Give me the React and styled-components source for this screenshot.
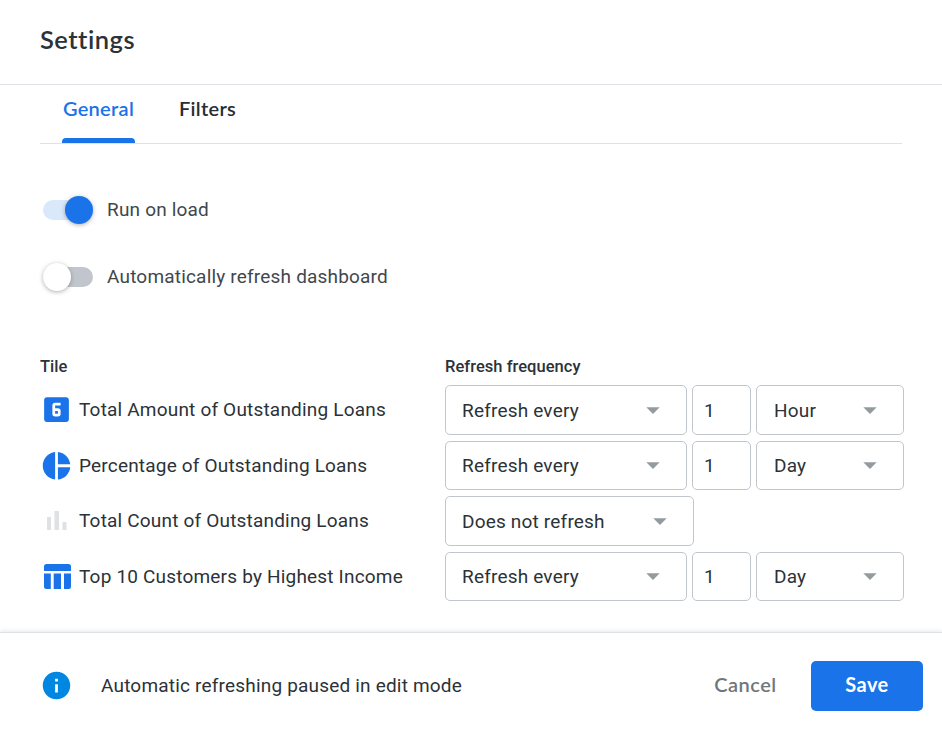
import React, { useState } from "react";
import styled, { createGlobalStyle } from "styled-components";
import { MdLooks6, MdPieChart, MdInfo, MdArrowDropDown } from "react-icons/md";

const GlobalStyle = createGlobalStyle`
  * { box-sizing: border-box; }
  body { margin: 0; background: #fff; }
  button, input { font: inherit; letter-spacing: inherit; color: inherit; }
`;

const Dialog = styled.div`
  display: flex;
  flex-direction: column;
  width: 942px;
  height: 732px;
  overflow: hidden;
  background: #fff;
  color: #2b3238;
  font-family: Roboto, sans-serif;
  font-size: 19px;
  line-height: 24px;
  letter-spacing: 0.19px;
`;

const Header = styled.header`
  height: 85px;
  padding: 23px 40px 0;
  border-bottom: 1px solid #dee1e5;
`;

const Title = styled.h1`
  margin: 0;
  font-family: Lato, sans-serif;
  font-size: 25.5px;
  line-height: 32px;
  font-weight: 600;
  letter-spacing: 0.5px;
`;

const Body = styled.main`
  flex: 1;
  padding: 0 38px 0 40px;
`;

const TabBar = styled.nav`
  display: flex;
  gap: 44px;
  height: 59px;
  margin-right: 2px;
  padding-left: 22px;
  border-bottom: 1px solid #dee1e5;
`;

const Tab = styled.button`
  display: flex;
  flex-direction: column;
  align-items: center;
  justify-content: space-between;
  width: ${(p) => p.$width}px;
  padding: 11px 0 0;
  border: 0;
  background: none;
  font-family: Lato, sans-serif;
  font-size: 20px;
  font-weight: 600;
  letter-spacing: 0.3px;
  white-space: nowrap;
  color: ${(p) => (p.$active ? "#1a73e8" : "#262d33")};
  &::after {
    content: "";
    width: 100%;
    height: 5px;
    border-radius: 4px 4px 0 0;
    background: ${(p) => (p.$active ? "#1a73e8" : "transparent")};
  }
`;

const Toggles = styled.div`
  display: flex;
  flex-direction: column;
  gap: 39px;
  padding: 52px 0 0 3px;
`;

const ToggleRow = styled.label`
  display: flex;
  align-items: center;
  gap: 14px;
  height: 28px;
  color: #3f474d;
`;

const Track = styled.button`
  display: flex;
  align-items: center;
  justify-content: ${(p) => (p.$on ? "flex-end" : "flex-start")};
  width: 50px;
  height: 20px;
  padding: 0;
  border: 0;
  border-radius: 10px;
  background: ${(p) => (p.$on ? "#d9e8fb" : "#c1c6cc")};
`;

const Knob = styled.span`
  flex: none;
  width: 28px;
  height: 28px;
  border-radius: 50%;
  background: ${(p) => (p.$on ? "#1a73e8" : "#fff")};
  box-shadow: 0 1px 4px rgba(60, 64, 67, 0.42);
`;

const Tiles = styled.div`
  display: grid;
  grid-template-columns: 405px 1fr;
  grid-template-rows: 19px 50px 49px 50px 49px;
  row-gap: 6px;
  padding-top: 69px;
  align-items: center;
`;

const Heading = styled.div`
  align-self: start;
  font-size: 16.5px;
  line-height: 14px;
  font-weight: 500;
  letter-spacing: 0.04px;
`;

const TileName = styled.div`
  display: flex;
  align-items: center;
  gap: 6px;
  white-space: nowrap;
`;

const TileIcon = styled.span`
  display: flex;
  width: 33px;
  height: 33px;
  margin-bottom: ${(p) => (p.$raised ? 2 : 0)}px;
  color: #1a73e8;
`;

const Controls = styled.div`
  display: flex;
  gap: 5px;
  height: 100%;
`;

const Select = styled.button`
  display: flex;
  align-items: center;
  justify-content: space-between;
  width: ${(p) => p.$width}px;
  padding: ${(p) => (p.$tall ? 1 : 0)}px 17.5px 0 ${(p) => p.$inset || 16}px;
  border: 1px solid #c1c6cc;
  border-radius: 5px;
  background: #fff;
  svg {
    margin-bottom: 1px;
    color: #939b9f;
  }
`;

const Amount = styled.input`
  width: 59px;
  padding: ${(p) => (p.$tall ? 1 : 0)}px 11px 0;
  border: 1px solid #c1c6cc;
  border-radius: 5px;
  background: #fff;
`;

const Footer = styled.footer`
  display: flex;
  align-items: center;
  height: 100px;
  padding: 6px 19px 0 40px;
  border-top: 1px solid #dee1e5;
  box-shadow: 0 -1px 4px rgba(60, 64, 67, 0.12);
`;

const Notice = styled.div`
  display: flex;
  flex: 1;
  align-items: center;
  gap: 28px;
  svg { color: #0087e1; }
`;

const ActionButton = styled.button`
  height: 50px;
  width: ${(p) => (p.$primary ? 112 : 131)}px;
  padding: 0 0 3px;
  border: 0;
  border-radius: 5px;
  background: ${(p) => (p.$primary ? "#1a73e8" : "transparent")};
  color: ${(p) => (p.$primary ? "#fff" : "#70777b")};
  font-family: Lato, sans-serif;
  font-size: 20px;
  font-weight: ${(p) => (p.$primary ? 700 : 600)};
  letter-spacing: ${(p) => (p.$primary ? 0.4 : 0.5)}px;
`;

const BarsIcon = () => (
  <svg width="33" height="33" viewBox="0 0 33 33" fill="#dee1e5">
    <path d="M7 13h4v13H7zM14.5 7H19v19h-4.5zM22.5 18h4v8h-4z" />
  </svg>
);

const TableIcon = () => (
  <svg width="33" height="33" viewBox="0 0 33 33" fill="currentColor">
    <path d="M6.5 4h22A2.5 2.5 0 0 1 31 6.500V11H4V6.500A2.500 2.500 0 0 1 6.500 4zM4 13.500h6.800V29H6.500A2.500 2.500 0 0 1 4 26.500zM13.700 13.500H21V29h-7.300zM24 13.500h7v13a2.500 2.500 0 0 1-2.500 2.500H24z" />
  </svg>
);

const tiles = [
  { name: "Total Amount of Outstanding Loans", icon: <MdLooks6 size={33} />, mode: "Refresh every", unit: "Hour", tall: true },
  { name: "Percentage of Outstanding Loans", icon: <MdPieChart size={33.5} />, mode: "Refresh every", unit: "Day" },
  { name: "Total Count of Outstanding Loans", icon: <BarsIcon />, mode: "Does not refresh", tall: true },
  { name: "Top 10 Customers by Highest Income", icon: <TableIcon />, mode: "Refresh every", unit: "Day" },
];

function Toggle({ label, initial }) {
  const [on, setOn] = useState(initial);
  return (
    <ToggleRow>
      <Track type="button" role="switch" aria-checked={on} $on={on} onClick={() => setOn(!on)}>
        <Knob $on={on} />
      </Track>
      {label}
    </ToggleRow>
  );
}

function Dropdown({ value, width, tall, inset }) {
  return (
    <Select type="button" $width={width} $tall={tall} $inset={inset}>
      {value}
      <MdArrowDropDown size={32} />
    </Select>
  );
}

function Tile({ tile }) {
  return (
    <>
      <TileName>
        <TileIcon $raised={tile.tall}>{tile.icon}</TileIcon>
        {tile.name}
      </TileName>
      <Controls>
        <Dropdown value={tile.mode} width={tile.unit ? 242 : 249} tall={tile.tall} />
        {tile.unit && <Amount defaultValue="1" aria-label="Interval" $tall={tile.tall} />}
        {tile.unit && <Dropdown value={tile.unit} width={148} tall={tile.tall} inset={17} />}
      </Controls>
    </>
  );
}

export default function App() {
  return (
    <Dialog>
      <GlobalStyle />
      <Header>
        <Title>Settings</Title>
      </Header>
      <Body>
        <TabBar>
          <Tab $active $width={73}>General</Tab>
          <Tab $width={57}>Filters</Tab>
        </TabBar>
        <Toggles>
          <Toggle label="Run on load" initial={true} />
          <Toggle label="Automatically refresh dashboard" initial={false} />
        </Toggles>
        <Tiles>
          <Heading>Tile</Heading>
          <Heading>Refresh frequency</Heading>
          {tiles.map((tile) => (
            <Tile key={tile.name} tile={tile} />
          ))}
        </Tiles>
      </Body>
      <Footer>
        <Notice>
          <MdInfo size={33} />
          Automatic refreshing paused in edit mode
        </Notice>
        <ActionButton>Cancel</ActionButton>
        <ActionButton $primary>Save</ActionButton>
      </Footer>
    </Dialog>
  );
}
